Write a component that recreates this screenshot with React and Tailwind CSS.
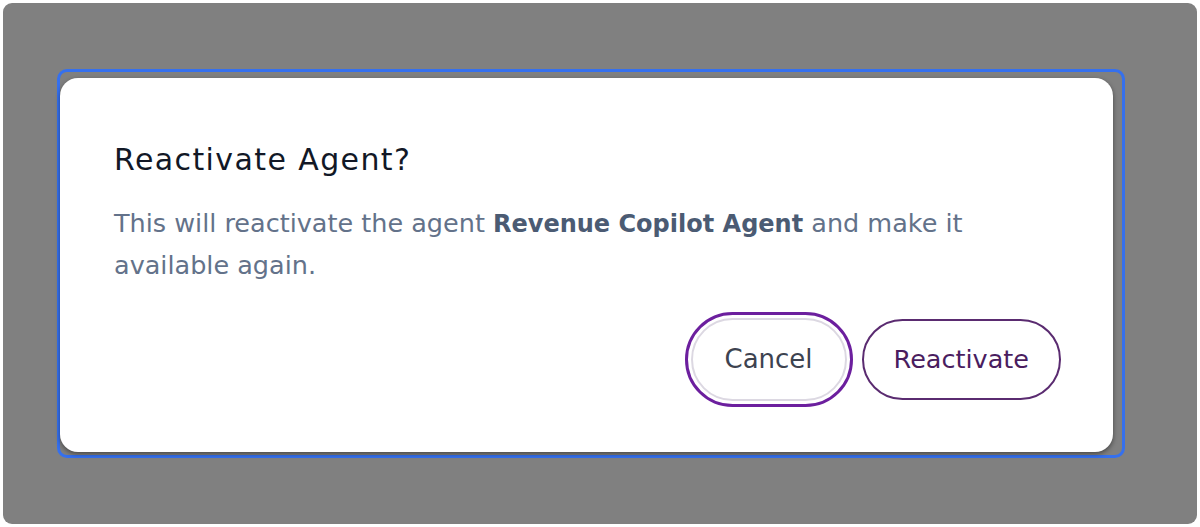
import React from "react";

const font = { fontFamily: '"DejaVu Sans", "Noto Sans", sans-serif' };

const ReactivateDialog = () => {
  return (
    <div className="w-[1053px] h-[374px] mt-[6px] bg-white rounded-[18px] shadow-[0_2px_5px_rgba(0,0,0,0.45)] flex flex-col pl-[54px] pr-[52px] pt-[64px] pb-[51px]">
      <h2 className="text-[30px] leading-[36px] font-normal tracking-[1.4px] text-[#121826]">
        Reactivate Agent?
      </h2>
      <p className="mt-[25px] text-[25.5px] leading-[41px] text-[#63728a] max-w-[880px]">
        This will reactivate the agent{" "}
        <span className="text-[24px] font-bold text-[#4b5b73]">Revenue Copilot Agent</span>{" "}
        and make it available again.
      </p>
      <div className="mt-auto flex justify-end items-center gap-[15px]">
        <button className="h-[83px] px-[32px] rounded-full border-2 border-[#dcd8e2] bg-white text-[26px] text-[#3d4350] outline-3 outline-offset-3 outline-[#6c1f9e]">
          Cancel
        </button>
        <button className="h-[81px] px-[30px] rounded-full border-2 border-[#5a2b70] bg-white text-[25.5px] text-[#4a1d5f]">
          Reactivate
        </button>
      </div>
    </div>
  );
};

export default function App() {
  return (
    <div className="w-[1200px] h-[527px] bg-white p-[3px]" style={font}>
      <div className="w-full h-full bg-[#808080] rounded-[9px] pl-[54px] pt-[66px]">
        <div className="w-[1068px] h-[389px] border-[3px] border-[#3570ee] rounded-[10px]">
          <ReactivateDialog />
        </div>
      </div>
    </div>
  );
}
